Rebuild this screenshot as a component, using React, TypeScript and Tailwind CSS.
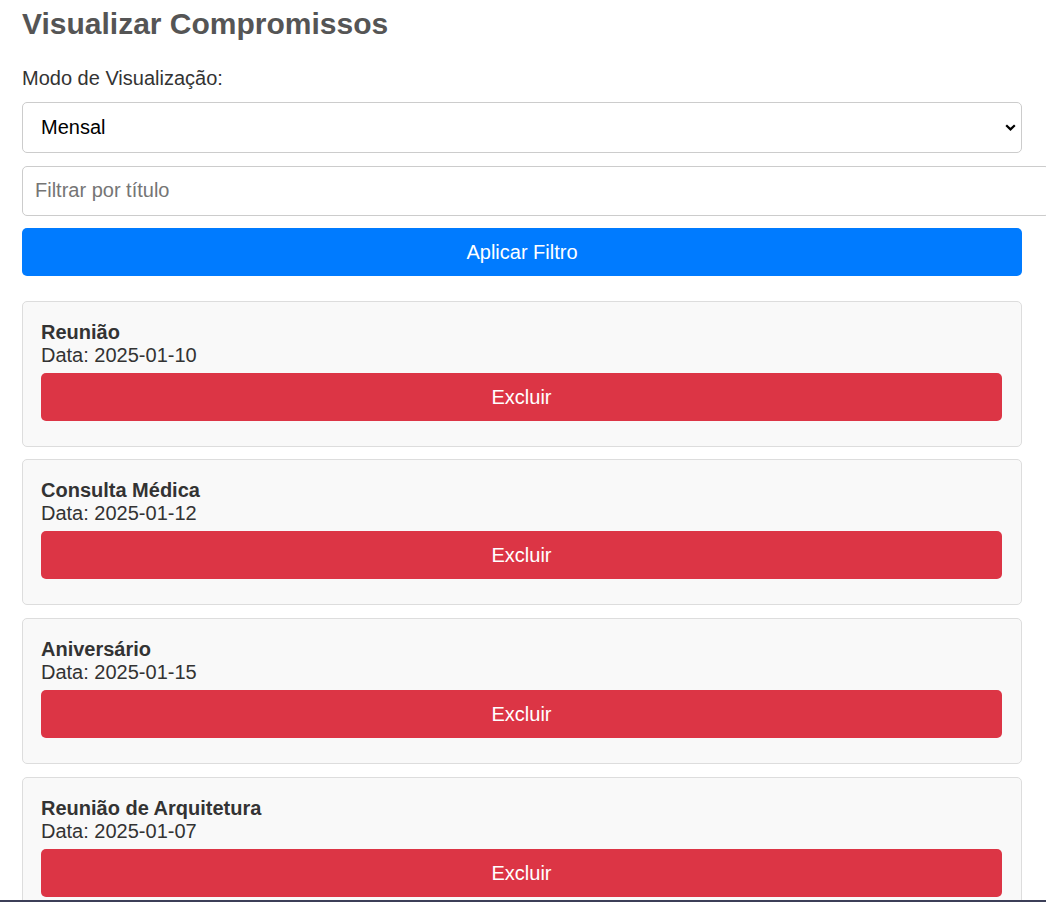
import { useState } from 'react';

type Compromisso = {
  id: number;
  titulo: string;
  data: string;
};

const inicial: Compromisso[] = [
  { id: 1, titulo: 'Reunião', data: '2025-01-10' },
  { id: 2, titulo: 'Consulta Médica', data: '2025-01-12' },
  { id: 3, titulo: 'Aniversário', data: '2025-01-15' },
  { id: 4, titulo: 'Reunião de Arquitetura', data: '2025-01-07' },
];

export default function App() {
  const [modo, setModo] = useState('mensal');
  const [filtro, setFiltro] = useState('');
  const [lista, setLista] = useState(inicial);

  const excluir = (id: number) => setLista(lista.filter((c) => c.id !== id));

  return (
    <div className="min-h-screen bg-white overflow-x-hidden font-['Liberation_Sans',Arial,sans-serif] text-[#333]">
      <div className="w-[1000px] ml-[22px] pt-[7px]">
        {/* Cabeçalho */}
        <h2 className="text-[30px] font-bold text-[#555] leading-[34.5px] mb-[25px]">
          Visualizar Compromissos
        </h2>

        <label className="block text-[20px] leading-[23px] text-[#333]">
          Modo de Visualização:
        </label>

        {/* Select */}
        <div className="relative mt-[12px]">
          <select
            value={modo}
            onChange={(e) => setModo(e.target.value)}
            className="appearance-none w-full h-[51px] border border-[#ccc] rounded-[5px] bg-white pl-[18px] text-[20px] text-black outline-none"
          >
            <option value="diario">Diário</option>
            <option value="semanal">Semanal</option>
            <option value="mensal">Mensal</option>
          </select>
          <svg
            className="absolute right-[6px] top-[22px] pointer-events-none"
            width="11"
            height="7"
            viewBox="0 0 11 7"
            fill="none"
          >
            <path d="M1.2 1.2 L5.5 5.4 L9.8 1.2" stroke="#000" strokeWidth="2.2" />
          </svg>
        </div>

        {/* Filtro */}
        <input
          value={filtro}
          onChange={(e) => setFiltro(e.target.value)}
          placeholder="Filtrar por título"
          className="block mt-[13px] w-[1028px] h-[50px] border border-[#ccc] rounded-[5px] px-[12px] text-[20px] text-black placeholder:text-[#757575] outline-none"
        />

        <button className="block mt-[12px] w-full h-[48px] bg-[#007bff] text-white text-[20px] rounded-[5px]">
          Aplicar Filtro
        </button>

        {/* Lista */}
        <div className="mt-[25px] flex flex-col gap-[12.75px] pb-[20px]">
          {lista.map((c) => (
            <div
              key={c.id}
              className="border border-[#ddd] bg-[#f9f9f9] rounded-[5px] pl-[18px] pr-[19px] pt-[19px] pb-[18px]"
            >
              <div className="text-[20px] leading-[23px] font-bold text-[#333]">{c.titulo}</div>
              <div className="text-[20px] leading-[23px] text-[#333]">Data: {c.data}</div>
              <button
                onClick={() => excluir(c.id)}
                className="block mt-[6px] mb-[7px] w-full h-[48px] bg-[#dc3545] text-white text-[20px] rounded-[5px]"
              >
                Excluir
              </button>
            </div>
          ))}
        </div>
      </div>

      <div className="fixed bottom-0 left-0 right-0 h-[2px] bg-[#3c3f58]" />
    </div>
  );
}
